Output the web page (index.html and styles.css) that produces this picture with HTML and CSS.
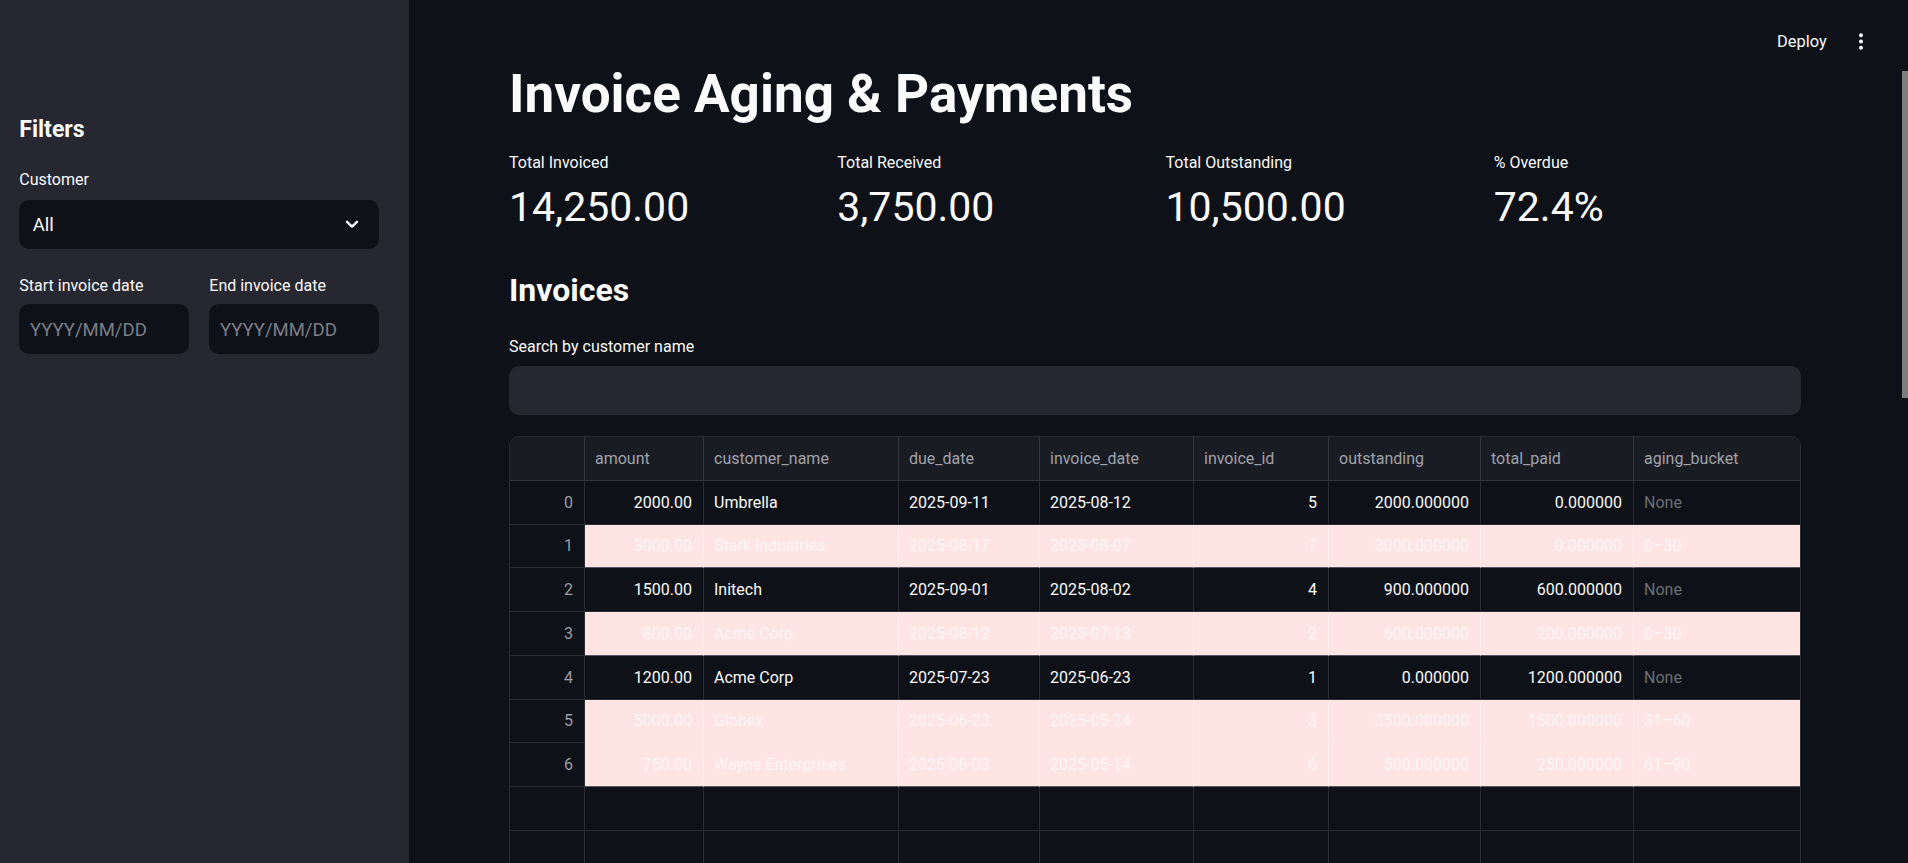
FILE: index.html
```html
<!DOCTYPE html>
<html lang="en">
<head>
<meta charset="utf-8">
<title>Invoice Aging &amp; Payments</title>
<link rel="stylesheet" href="styles.css">
</head>
<body>
<div class="app">
  <aside class="sidebar">
    <h2 class="side-title">Filters</h2>
    <div class="field">
      <label class="label">Customer</label>
      <div class="select">
        <span class="select-value">All</span>
        <svg class="chev" width="14" height="9" viewBox="0 0 14 9"><polyline points="2,1.8 7,6.6 12,1.8" fill="none" stroke="#fafafa" stroke-width="2.4" stroke-linecap="round" stroke-linejoin="round"/></svg>
      </div>
    </div>
    <div class="date-row">
      <div class="field">
        <label class="label">Start invoice date</label>
        <div class="date-input">YYYY/MM/DD</div>
      </div>
      <div class="field">
        <label class="label">End invoice date</label>
        <div class="date-input">YYYY/MM/DD</div>
      </div>
    </div>
  </aside>

  <main class="main">
    <header class="topbar">
      <span class="deploy">Deploy</span>
      <svg class="menu-dots" width="4" height="18" viewBox="0 0 4 18"><circle cx="2" cy="2.2" r="2" fill="#fafafa"/><circle cx="2" cy="8.5" r="2" fill="#fafafa"/><circle cx="2" cy="14.8" r="2" fill="#fafafa"/></svg>
    </header>
    <div class="scroll-thumb"></div>

    <section class="content">
      <h1 class="title">Invoice Aging &amp; Payments</h1>

      <div class="metrics">
        <div class="metric"><div class="metric-label">Total Invoiced</div><div class="metric-value">14,250.00</div></div>
        <div class="metric"><div class="metric-label">Total Received</div><div class="metric-value">3,750.00</div></div>
        <div class="metric"><div class="metric-label">Total Outstanding</div><div class="metric-value">10,500.00</div></div>
        <div class="metric"><div class="metric-label">% Overdue</div><div class="metric-value">72.4%</div></div>
      </div>

      <h3 class="subheader">Invoices</h3>
      <label class="label search-label">Search by customer name</label>
      <div class="search"></div>

      <div class="grid">
        <div class="row head">
          <div class="cell idx"></div>
          <div class="cell">amount</div>
          <div class="cell">customer_name</div>
          <div class="cell">due_date</div>
          <div class="cell">invoice_date</div>
          <div class="cell">invoice_id</div>
          <div class="cell">outstanding</div>
          <div class="cell">total_paid</div>
          <div class="cell">aging_bucket</div>
        </div>

        <div class="row">
          <div class="cell idx">0</div>
          <div class="cell num">2000.00</div>
          <div class="cell">Umbrella</div>
          <div class="cell">2025-09-11</div>
          <div class="cell">2025-08-12</div>
          <div class="cell num">5</div>
          <div class="cell num">2000.000000</div>
          <div class="cell num">0.000000</div>
          <div class="cell none">None</div>
        </div>
        <div class="row hl">
          <div class="cell idx">1</div>
          <div class="cell num">3000.00</div>
          <div class="cell">Stark Industries</div>
          <div class="cell">2025-08-17</div>
          <div class="cell">2025-08-07</div>
          <div class="cell num">7</div>
          <div class="cell num">3000.000000</div>
          <div class="cell num">0.000000</div>
          <div class="cell">0–30</div>
        </div>
        <div class="row">
          <div class="cell idx">2</div>
          <div class="cell num">1500.00</div>
          <div class="cell">Initech</div>
          <div class="cell">2025-09-01</div>
          <div class="cell">2025-08-02</div>
          <div class="cell num">4</div>
          <div class="cell num">900.000000</div>
          <div class="cell num">600.000000</div>
          <div class="cell none">None</div>
        </div>
        <div class="row hl">
          <div class="cell idx">3</div>
          <div class="cell num">800.00</div>
          <div class="cell">Acme Corp</div>
          <div class="cell">2025-08-12</div>
          <div class="cell">2025-07-13</div>
          <div class="cell num">2</div>
          <div class="cell num">600.000000</div>
          <div class="cell num">200.000000</div>
          <div class="cell">0–30</div>
        </div>
        <div class="row">
          <div class="cell idx">4</div>
          <div class="cell num">1200.00</div>
          <div class="cell">Acme Corp</div>
          <div class="cell">2025-07-23</div>
          <div class="cell">2025-06-23</div>
          <div class="cell num">1</div>
          <div class="cell num">0.000000</div>
          <div class="cell num">1200.000000</div>
          <div class="cell none">None</div>
        </div>
        <div class="row hl joined">
          <div class="cell idx">5</div>
          <div class="cell num">5000.00</div>
          <div class="cell">Globex</div>
          <div class="cell">2025-06-23</div>
          <div class="cell">2025-05-24</div>
          <div class="cell num">3</div>
          <div class="cell num">3500.000000</div>
          <div class="cell num">1500.000000</div>
          <div class="cell">31–60</div>
        </div>
        <div class="row hl">
          <div class="cell idx">6</div>
          <div class="cell num">750.00</div>
          <div class="cell">Wayne Enterprises</div>
          <div class="cell">2025-06-03</div>
          <div class="cell">2025-05-14</div>
          <div class="cell num">6</div>
          <div class="cell num">500.000000</div>
          <div class="cell num">250.000000</div>
          <div class="cell">61–90</div>
        </div>
        <div class="row empty">
          <div class="cell idx"></div><div class="cell"></div><div class="cell"></div><div class="cell"></div><div class="cell"></div><div class="cell"></div><div class="cell"></div><div class="cell"></div><div class="cell"></div>
        </div>
        <div class="row empty">
          <div class="cell idx"></div><div class="cell"></div><div class="cell"></div><div class="cell"></div><div class="cell"></div><div class="cell"></div><div class="cell"></div><div class="cell"></div><div class="cell"></div>
        </div>
      </div>
    </section>
  </main>
</div>
</body>
</html>
```

FILE: styles.css
```css
* { box-sizing: border-box; }

html, body {
  margin: 0;
  padding: 0;
  height: 100%;
  overflow: hidden;
  background: #0e1117;
  color: #fafafa;
  font-family: Roboto, "Liberation Sans", sans-serif;
}

.app {
  display: flex;
  height: 863px;
  overflow: hidden;
}

/* ---------- Sidebar ---------- */
.sidebar {
  width: 409px;
  flex: 0 0 409px;
  background: #262730;
  padding: 115.8px 30.3px 0 19.3px;
}

.side-title {
  margin: 0;
  font-size: 23px;
  line-height: 27.6px;
  font-weight: 700;
}

.field {
  display: flex;
  flex-direction: column;
}

.sidebar > .field {
  margin-top: 24.6px;
}

.label {
  font-size: 16px;
  line-height: 24px;
  font-weight: 400;
  color: #fafafa;
}

.select {
  margin-top: 7.8px;
  height: 49.4px;
  border-radius: 10px;
  background: #0e1117;
  display: flex;
  align-items: center;
  justify-content: space-between;
  padding: 0 19.7px 0 13.4px;
}

.select-value {
  font-size: 18.5px;
  line-height: 24px;
  padding-top: 1px;
}

.chev { display: block; }

.date-row {
  margin-top: 24.5px;
  display: grid;
  grid-template-columns: 1fr 1fr;
  column-gap: 20.6px;
}

.date-input {
  margin-top: 6.8px;
  height: 49.4px;
  border-radius: 10px;
  background: #0e1117;
  display: flex;
  align-items: center;
  padding: 1px 0 0 10.7px;
  font-size: 18.5px;
  color: #7b7e88;
}

/* ---------- Main ---------- */
.main {
  flex: 1;
  position: relative;
  display: flex;
  flex-direction: column;
  min-width: 0;
}

.topbar {
  flex: none;
  height: 63.4px;
  padding: 30px 44.7px 0 0;
  display: flex;
  justify-content: flex-end;
  align-items: flex-start;
  gap: 32.6px;
}

.deploy {
  font-size: 16.4px;
  line-height: 24px;
  font-weight: 400;
}

.menu-dots {
  margin-top: 3px;
  display: block;
}

.scroll-thumb {
  position: absolute;
  right: 0;
  top: 71px;
  width: 6px;
  height: 327px;
  background: #7d7d7d;
}

.content {
  flex: none;
  padding: 0 107px 0 100px;
}

.title {
  margin: 0;
  font-size: 53px;
  line-height: 63.6px;
  font-weight: 700;
  letter-spacing: 0;
}

.metrics {
  margin-top: 24.2px;
  display: grid;
  grid-template-columns: repeat(4, 1fr);
  column-gap: 21px;
}

.metric-label {
  font-size: 16px;
  line-height: 24px;
}

.metric-value {
  margin-top: 7.4px;
  font-size: 41px;
  line-height: 49px;
  font-weight: 400;
}

.subheader {
  margin: 39.7px 0 0;
  font-size: 32px;
  line-height: 38.4px;
  font-weight: 700;
}

.search-label {
  display: block;
  margin-top: 24.9px;
}

.search {
  margin-top: 7.1px;
  height: 49.4px;
  border-radius: 10px;
  background: #262730;
}

/* ---------- Data grid ---------- */
.grid {
  margin-top: 20.8px;
  border: 1px solid rgba(250, 250, 250, 0.12);
  border-radius: 10px;
  overflow: hidden;
  font-size: 16px;
}

.row {
  display: grid;
  grid-template-columns: 75px 119px 195px 141px 154px 135px 152px 153px 1fr;
  height: 43.75px;
}

.cell {
  border-right: 1px solid rgba(250, 250, 250, 0.12);
  border-bottom: 1px solid rgba(250, 250, 250, 0.12);
  padding: 0 11px 0 10px;
  display: flex;
  align-items: center;
  white-space: nowrap;
  overflow: hidden;
  color: #fafafa;
  background: #0e1117;
}

.cell:last-child { border-right: none; }

.row.head { height: 44px; }

.row.head .cell {
  background: #1a1c24;
  color: #a0a2a9;
}

.cell.idx {
  justify-content: flex-end;
  color: #9c9ea4;
}

.cell.num { justify-content: flex-end; }

.cell.none { color: #6c6e74; }

.row.hl .cell:not(.idx) {
  background: #ffe4e4;
  color: #fbf6f6;
  border-right-color: rgba(255, 255, 255, 0.35);
  border-bottom-color: #55565d;
}

.row.hl.joined .cell:not(.idx) {
  border-bottom-color: #ffe4e4;
}

.row.empty .cell { background: #0e1117; }
```
